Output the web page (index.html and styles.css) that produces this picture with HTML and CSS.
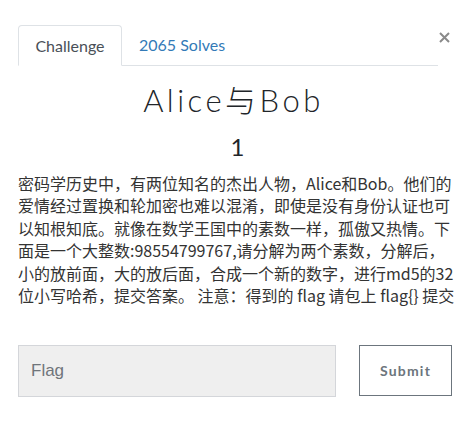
FILE: index.html
```html
<!DOCTYPE html>
<html lang="zh">
<head>
<meta charset="utf-8">
<link rel="stylesheet" href="styles.css">
</head>
<body>
<div class="modal">
  <div class="header">
    <ul class="tabs">
      <li class="tab active">Challenge</li>
      <li class="tab link">2065 Solves</li>
    </ul>
    <button class="close" aria-label="Close">
      <svg width="11" height="11" viewBox="0 0 11 11"><path d="M1 1L10 10M10 1L1 10" stroke="#8a8a8a" stroke-width="2"/></svg>
    </button>
  </div>
  <h2 class="name">Alice与Bob</h2>
  <h3 class="value">1</h3>
  <p class="desc">密码学历史中，有两位知名的杰出人物，Alice和Bob。他们的爱情经过置换和轮加密也难以混淆，即使是没有身份认证也可以知根知底。就像在数学王国中的素数一样，孤傲又热情。下面是一个大整数:98554799767,请分解为两个素数，分解后，小的放前面，大的放后面，合成一个新的数字，进行md5的32位小写哈希，提交答案。 注意：得到的 flag 请包上 flag{} 提交</p>
  <div class="submit-row">
    <input class="flag-input" type="text" placeholder="Flag">
    <button class="submit">Submit</button>
  </div>
</div>
</body>
</html>
```

FILE: styles.css
```css
html, body {
  margin: 0;
  padding: 0;
  background: #fff;
}
body {
  font-family: Lato, "Noto Sans CJK SC", sans-serif;
  color: #212529;
}
.modal {
  width: 439px;
  padding: 25px 0 0 18px;
}
.header {
  display: flex;
  align-items: flex-start;
}
.tabs {
  flex: 1;
  display: flex;
  list-style: none;
  margin: 0;
  padding: 0;
  border-bottom: 1px solid #dee2e6;
  height: 40px;
}
.tab {
  font-size: 16px;
  line-height: 40px;
  height: 40px;
  padding: 0 17px;
  box-sizing: border-box;
}
.tab.active {
  color: #495057;
  border: 1px solid #dee2e6;
  border-bottom-color: #fff;
  border-radius: 4px 4px 0 0;
  height: 41px;
  width: 104px;
  text-align: center;
  padding: 0;
  background: #fff;
}
.tab.link {
  color: #337ab7;
}
.close {
  border: 0;
  background: none;
  padding: 0;
  margin: 7px 0 0 0;
  width: 19px;
  height: 11px;
  display: flex;
  justify-content: flex-start;
  padding-left: 1px;
}
.name {
  margin: 16px 0 0;
  padding-right: 8px;
  text-align: center;
  font-family: Lato, "Noto Sans CJK SC", sans-serif;
  font-weight: 300;
  font-size: 31px;
  line-height: 36px;
  color: #212529;
  letter-spacing: 3.5px;
}
.value {
  margin: 14px 0 0;
  text-align: center;
  font-weight: 400;
  font-size: 24px;
  line-height: 30px;
  color: #212529;
}
.desc {
  margin: 10px 0 0;
  font-family: "Noto Sans CJK SC", sans-serif;
  font-size: 16px;
  line-height: 22.4px;
  color: #333;
}
.submit-row {
  display: flex;
  gap: 23px;
  margin-top: 39px;
  width: 434px;
}
.flag-input {
  width: 318px;
  height: 52px;
  box-sizing: border-box;
  background: #efefef;
  border: 1px solid #d4d6da;
  padding: 0 12px;
  font-family: "Liberation Sans", Arial, sans-serif;
  font-size: 17px;
  color: #495057;
}
.flag-input::placeholder {
  color: #6f757b;
}
.submit {
  width: 93px;
  height: 51px;
  box-sizing: border-box;
  background: #fff;
  border: 1px solid #6c757d;
  font-family: Lato, sans-serif;
  font-weight: 700;
  font-size: 14px;
  letter-spacing: 1.2px;
  color: #6c757d;
}
```
